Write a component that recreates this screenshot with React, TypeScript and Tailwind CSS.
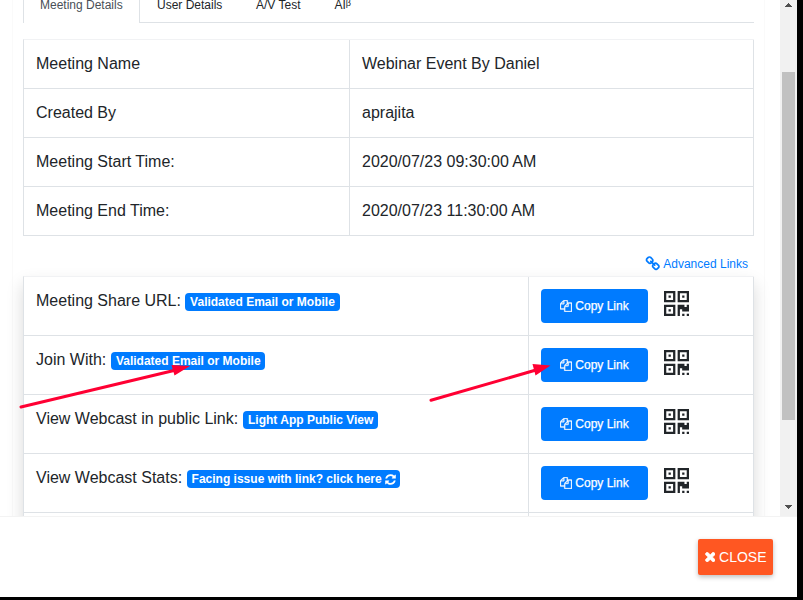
import React from "react";

type IconProps = { d: string; className: string; viewBox?: string };

function Icon({ d, className, viewBox = "0 0 1792 1792" }: IconProps) {
  return (
    <svg viewBox={viewBox} className={className} fill="currentColor" stroke="currentColor" aria-hidden="true">
      <path d={d} />
    </svg>
  );
}

const COPY =
  "M1696 384q40 0 68 28t28 68v1216q0 40-28 68t-68 28h-960q-40 0-68-28t-28-68v-288h-544q-40 0-68-28t-28-68v-672q0-40 20-88t48-76l408-408q28-28 76-48t88-20h416q40 0 68 28t28 68v328q68-40 128-40h416zm-544 213l-299 299h299v-299zm-640-384l-299 299h299v-299zm196 647l316-316v-416h-384v416q0 40-28 68t-68 28h-416v640h512v-256q0-40 20-88t48-76zm956 804v-1152h-384v416q0 40-28 68t-68 28h-416v640h896z";
const CHAIN =
  "M1520 1216q0-40-28-68l-208-208q-28-28-68-28-42 0-72 32 3 3 19 18.5t21.5 21.5 15 19 13 25.5 3.5 27.5q0 40-28 68t-68 28q-15 0-27.5-3.5t-25.5-13-19-15-21.5-21.5-18.5-19q-33 31-33 73 0 40 28 68l206 207q27 27 68 27 40 0 68-26l147-146q28-28 28-67zm-703-705q0-40-28-68l-206-207q-28-28-68-28-39 0-68 27l-147 146q-28 28-28 67 0 40 28 68l208 208q27 27 68 27 42 0 72-31-3-3-19-18.5t-21.5-21.5-15-19-13-25.5-3.5-27.5q0-40 28-68t68-28q15 0 27.5 3.5t25.5 13 19 15 21.5 21.5 18.5 19q33-31 33-73zm895 705q0 120-85 203l-147 146q-83 83-203 83-121 0-204-85l-206-207q-83-83-83-203 0-123 88-209l-88-88q-86 88-208 88-120 0-204-84l-208-208q-84-84-84-204t85-203l147-146q83-83 203-83 121 0 204 85l206 207q83 83 83 203 0 123-88 209l88 88q86-88 208-88 120 0 204 84l208 208q84 84 84 204z";
const TIMES =
  "M1490 1322q0 40-28 68l-136 136q-28 28-68 28t-68-28l-294-294-294 294q-28 28-68 28t-68-28l-136-136q-28-28-28-68t28-68l294-294-294-294q-28-28-28-68t28-68l136-136q28-28 68-28t68 28l294 294 294-294q28-28 68-28t68 28l136 136q28 28 28 68t-28 68l-294 294 294 294q28 28 28 68z";
const REFRESH =
  "M1639 1056q0 5-1 7-64 268-268 434.5t-478 166.5q-146 0-282.5-55t-243.5-157l-129 129q-19 19-45 19t-45-19-19-45v-448q0-26 19-45t45-19h448q26 0 45 19t19 45-19 45l-137 137q71 66 161 102t187 36q134 0 250-65t186-179q11-17 53-117 8-23 30-23h192q13 0 22.5 9.5t9.5 22.5zm25-800v448q0 26-19 45t-45 19h-448q-26 0-45-19t-19-45 19-45l138-138q-148-137-349-137-134 0-250 65t-186 179q-11 17-53 117-8 23-30 23h-199q-13 0-22.5-9.5t-9.5-22.5v-7q65-268 270-434.5t480-166.5q146 0 284 55.5t245 156.5l130-129q19-19 45-19t45 19 19 45z";

function QrCode() {
  return (
    <svg viewBox="0 0 11 11" className="mt-[14px] ml-4 size-[25px]" fill="currentColor" aria-hidden="true">
      <path
        fillRule="evenodd"
        d="M0 0h5v5h-5zM1 1v3h3v-3zM2 2h1v1h-1zM6 0h5v5h-5zM7 1v3h3v-3zM8 2h1v1h-1zM0 6h5v5h-5zM1 7v3h3v-3zM2 8h1v1h-1zM11 6v3h-3v-1h-1v3h-1v-5h3v1h1v-1zM8 10h1v1h-1zM10 10h1v1h-1z"
      />
    </svg>
  );
}

const details = [
  ["Meeting Name", "Webinar Event By Daniel"],
  ["Created By", "aprajita"],
  ["Meeting Start Time:", "2020/07/23 09:30:00 AM"],
  ["Meeting End Time:", "2020/07/23 11:30:00 AM"],
];

const links = [
  { label: "Meeting Share URL:", badge: "Validated Email or Mobile", size: "ml-1 w-[155px]" },
  { label: "Join With:", badge: "Validated Email or Mobile", size: "ml-[5px] w-[154px]" },
  { label: "View Webcast in public Link:", badge: "Light App Public View", size: "ml-[5px] w-[135px]" },
  { label: "View Webcast Stats:", badge: "Facing issue with link? click here", size: "ml-[5px] w-[213px]", refresh: true },
];

function Scrollbar() {
  return (
    <div className="flex w-[17px] shrink-0 flex-col items-center bg-[#f1f1f1]">
      <svg viewBox="0 0 7 4" className="mt-[3px] h-1 w-[7px]" fill="#505050" shapeRendering="crispEdges">
        <path d="M3 0h1v1h1v1h1v1h1v1H0V3h1V2h1V1h1z" />
      </svg>
      <div className="mt-[65px] h-[348px] w-[13px] bg-[#c1c1c1]" />
      <svg viewBox="0 0 7 4" className="mt-[85px] h-1 w-[7px]" fill="#505050" shapeRendering="crispEdges">
        <path d="M0 0h7v1H6v1H5v1H4v1H3V3H2V2H1V1H0z" />
      </svg>
    </div>
  );
}

export default function App() {
  return (
    <div className="relative h-[600px] w-[803px] overflow-hidden bg-black font-['Liberation_Sans',Arial,sans-serif] text-[#212529]">
      <div className="flex h-[597px] w-[797px] flex-col bg-white">
        <div className="flex h-[516px] overflow-hidden">
          <div className="mr-[15px] ml-3 h-[600px] w-[753px] border-x border-[#fafafa] pr-2.5 pl-2.5">
            <nav className="flex h-[23px] w-[731px] text-[12px] leading-[18px]">
              <div className="h-[23px] w-[117px] shrink-0 border-x border-[#dee2e6] pl-4 text-[#495057]">
                <span className="-mt-1 block whitespace-nowrap">Meeting Details</span>
              </div>
              <div className="flex flex-1 border-b border-[#dee2e6] pl-[17px] whitespace-nowrap">
                <span className="-mt-1 w-[99px]">User Details</span>
                <span className="-mt-1 w-[78.5px]">A/V Test</span>
                <span className="-mt-1">
                  AI<span className="relative -top-[3px] text-[9px]">β</span>
                </span>
              </div>
            </nav>

            <div className="mt-4 w-[731px] border-t border-l border-t-[#f1f2f4] border-l-[#dee2e6]">
              {details.map(([name, value]) => (
                <div key={name} className="flex h-[49px] border-b border-[#dee2e6] text-[16px] leading-[48px] whitespace-nowrap">
                  <div className="w-[326px] border-r border-[#dee2e6] pl-3">{name}</div>
                  <div className="flex-1 border-r border-[#dee2e6] pl-3">{value}</div>
                </div>
              ))}
            </div>

            <div className="flex h-10 w-[731px] items-center justify-end pt-4 pr-1.5 text-[12px] text-[#007bff]">
              <Icon d={CHAIN} className="mr-[3px] size-[15.5px] stroke-[10]" />
              Advanced Links
            </div>

            <div className="w-[731px] border-t border-l border-t-[#f1f2f4] border-l-[#dee2e6] bg-white shadow-[0_8px_16px_rgba(0,0,0,0.15)]">
              {links.map((row) => (
                <div key={row.label} className="flex h-[59px] border-b border-[#dee2e6]">
                  <div className="flex w-[505px] border-r border-[#dee2e6] pl-3 whitespace-nowrap">
                    <span className="mt-3 text-[16px] leading-6">{row.label}</span>
                    <span
                      className={
                        "mt-4 flex h-[18px] items-center justify-center rounded bg-[#007bff] text-[12px] font-bold text-white " +
                        row.size
                      }
                    >
                      {row.badge}
                      {row.refresh && <Icon d={REFRESH} className="ml-[3px] size-[11px] stroke-[10]" viewBox="96 96 1600 1600" />}
                    </span>
                  </div>
                  <div className="flex flex-1 border-r border-[#dee2e6] pl-3">
                    <button className="mt-3 flex h-[34px] w-[107px] items-center justify-center rounded bg-[#007bff] text-[12px] whitespace-nowrap text-white [-webkit-text-stroke:0.25px_white]">
                      <Icon d={COPY} className="mr-[3px] size-3 stroke-[50]" />
                      Copy Link
                    </button>
                    <QrCode />
                  </div>
                </div>
              ))}
              <div className="flex h-[59px]">
                <div className="w-[505px] border-r border-[#dee2e6]" />
                <div className="flex-1 border-r border-[#dee2e6]" />
              </div>
            </div>
          </div>
          <Scrollbar />
        </div>

        <footer className="flex h-[81px] justify-end border-t border-[#f3f3f3] pt-[22px] pr-6">
          <button className="flex h-9 w-[75px] items-center justify-center rounded-[2px] bg-[#ff5722] text-[14px] text-white shadow-[0_2px_5px_rgba(0,0,0,0.26)]">
            <Icon d={TIMES} className="mr-1 size-[10.5px] stroke-[70]" viewBox="270 366 1252 1220" />
            CLOSE
          </button>
        </footer>
      </div>

      <svg className="pointer-events-none absolute inset-0 h-[600px] w-[803px]" fill="#ff0033" stroke="#ff0033">
        <path d="M21 407L176 370M431 400.3L536 370" strokeWidth="3" strokeLinecap="round" />
        <path d="M190 366L171.5 365L174.5 375.5Z M550.5 365.5L532.5 364L535.5 375.5Z" stroke="none" />
      </svg>
    </div>
  );
}
